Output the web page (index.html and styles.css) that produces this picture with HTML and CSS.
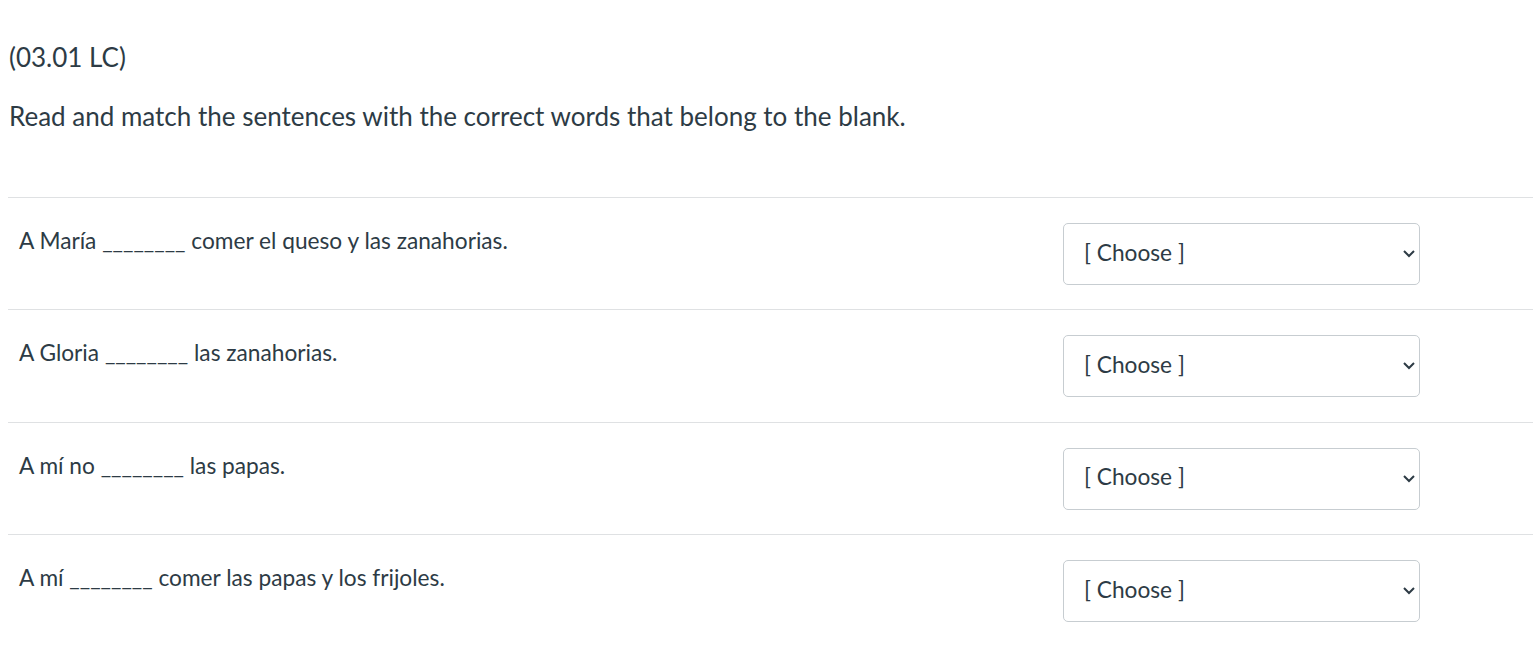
FILE: index.html
```html
<!DOCTYPE html>
<html lang="es">
<head>
<meta charset="utf-8">
<title>(03.01 LC)</title>
<link rel="stylesheet" href="styles.css">
</head>
<body>
<div class="question">
  <div class="header">
    <p class="code">(03.01 LC)</p>
    <p class="prompt">Read and match the sentences with the correct words that belong to the blank.</p>
  </div>
  <div class="answers">
    <div class="row">
      <div class="sentence">A María ________ comer el queso y las zanahorias.</div>
      <div class="select-wrap">
        <select class="choose"><option>[ Choose ]</option></select>
        <svg class="chev" width="14" height="9" viewBox="0 0 14 9"><path d="M2 2 L7 7 L12 2" fill="none" stroke="#2d3b45" stroke-width="2"/></svg>
      </div>
    </div>
    <div class="row">
      <div class="sentence">A Gloria ________ las zanahorias.</div>
      <div class="select-wrap">
        <select class="choose"><option>[ Choose ]</option></select>
        <svg class="chev" width="14" height="9" viewBox="0 0 14 9"><path d="M2 2 L7 7 L12 2" fill="none" stroke="#2d3b45" stroke-width="2"/></svg>
      </div>
    </div>
    <div class="row">
      <div class="sentence">A mí no ________ las papas.</div>
      <div class="select-wrap">
        <select class="choose"><option>[ Choose ]</option></select>
        <svg class="chev" width="14" height="9" viewBox="0 0 14 9"><path d="M2 2 L7 7 L12 2" fill="none" stroke="#2d3b45" stroke-width="2"/></svg>
      </div>
    </div>
    <div class="row">
      <div class="sentence">A mí ________ comer las papas y los frijoles.</div>
      <div class="select-wrap">
        <select class="choose"><option>[ Choose ]</option></select>
        <svg class="chev" width="14" height="9" viewBox="0 0 14 9"><path d="M2 2 L7 7 L12 2" fill="none" stroke="#2d3b45" stroke-width="2"/></svg>
      </div>
    </div>
  </div>
</div>
</body>
</html>
```
FILE: styles.css
```css
html, body {
  margin: 0;
  padding: 0;
  background: #ffffff;
}
body {
  font-family: Lato, "Open Sans", "Liberation Sans", sans-serif;
  color: #2d3b45;
}
.question {
  padding-left: 8px;
}
.header {
  padding-top: 39px;
  padding-left: 1px;
}
.code {
  margin: 0;
  font-size: 26px;
  line-height: 36px;
}
.prompt {
  margin: 23px 0 0 0;
  font-size: 26px;
  line-height: 36px;
}
.answers {
  margin-top: 63px;
}
.row {
  display: flex;
  align-items: flex-start;
  border-top: 1px solid #dfe1e3;
  padding: 25px 0 24.4px 11px;
}
.sentence {
  flex: 0 0 1044px;
  font-size: 22.7px;
  line-height: 30px;
  padding-top: 3px;
}
.select-wrap {
  position: relative;
  width: 357px;
}
.choose {
  appearance: none;
  -webkit-appearance: none;
  display: block;
  width: 357px;
  height: 62px;
  border: 1px solid #c7cdd1;
  border-radius: 5px;
  background: #ffffff;
  color: #2d3b45;
  font-family: Lato, "Open Sans", "Liberation Sans", sans-serif;
  font-size: 22.7px;
  padding: 0 40px 4px 20px;
  margin: 0;
}
.chev {
  position: absolute;
  right: 4px;
  top: 26px;
  pointer-events: none;
}
```
